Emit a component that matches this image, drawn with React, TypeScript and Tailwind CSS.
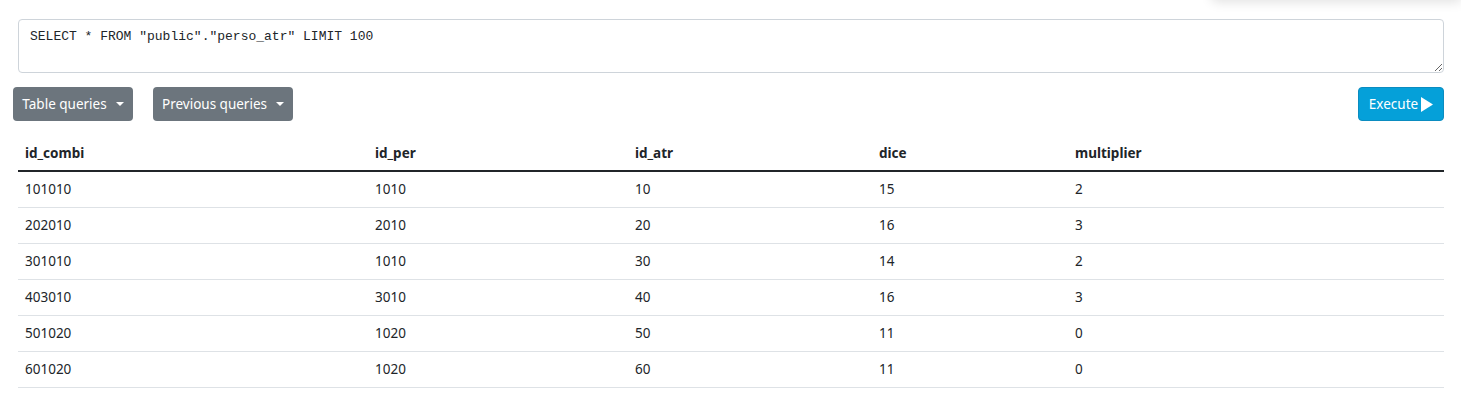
import React from "react";

const rows = [
  ["101010", "1010", "10", "15", "2"],
  ["202010", "2010", "20", "16", "3"],
  ["301010", "1010", "30", "14", "2"],
  ["403010", "3010", "40", "16", "3"],
  ["501020", "1020", "50", "11", "0"],
  ["601020", "1020", "60", "11", "0"],
];

const headers = ["id_combi", "id_per", "id_atr", "dice", "multiplier"];
const widths = ["w-[350px]", "w-[260px]", "w-[244px]", "w-[196px]", ""];

const Caret: React.FC = () => (
  <span className="ml-[9px] inline-block w-0 h-0 border-l-[4px] border-r-[4px] border-t-[4px] border-l-transparent border-r-transparent border-t-white align-middle" />
);

const App: React.FC = () => {
  return (
    <div className="relative w-[1461px] h-[418px] bg-white overflow-hidden font-['Segoe_UI','Noto_Sans',sans-serif] text-[#212529]">
      <div className="absolute right-0 top-[-40px] w-[250px] h-[40px] bg-white shadow-[0_2px_12px_rgba(0,0,0,0.12)] rounded-bl-[6px]" />
      <div className="pt-[19px] pl-[18px] pr-[17px]">
        <textarea
          defaultValue={'SELECT * FROM "public"."perso_atr" LIMIT 100'}
          className="block w-full h-[54px] border border-[#ced4da] rounded-[4px] px-[11px] py-[8px] font-['Liberation_Mono',monospace] text-[13px] leading-[18px] text-[#212529] outline-none resize-y"
        />
      </div>
      <div className="flex items-center mt-[14px] pl-[13px] pr-[17px]">
        <button className="h-[34px] w-[120px] flex items-center justify-center bg-[#6c757d] text-white text-[13.5px] rounded-[4px]">
          Table queries
          <Caret />
        </button>
        <button className="ml-[20px] h-[34px] w-[140px] flex items-center justify-center bg-[#6c757d] text-white text-[13.5px] rounded-[4px]">
          Previous queries
          <Caret />
        </button>
        <button className="ml-auto h-[34px] w-[86px] flex items-center justify-center bg-[#05a0d9] border border-[#0b8cc0] text-white text-[13.5px] rounded-[4px]">
          Execute
          <svg width="12" height="15" viewBox="0 0 12 15" className="ml-[3px]">
            <path d="M0 0 L12 7.5 L0 15 Z" fill="white" />
          </svg>
        </button>
      </div>
      <div className="pl-[18px] pr-[17px] mt-[16px]">
        <table className="w-full border-collapse text-[13.5px]">
          <thead>
            <tr className="border-b-2 border-[#212529]">
              {headers.map((h, i) => (
                <th key={h} className={`${widths[i]} text-left font-bold px-[7px] pt-[7px] pb-[7px] leading-[19px]`}>
                  {h}
                </th>
              ))}
            </tr>
          </thead>
          <tbody>
            {rows.map((r, ri) => (
              <tr key={ri} className="border-b border-[#dee2e6]">
                {r.map((c, ci) => (
                  <td key={ci} className="px-[7px] h-[36px] leading-[19px] align-middle">
                    {c}
                  </td>
                ))}
              </tr>
            ))}
          </tbody>
        </table>
      </div>
    </div>
  );
};

export default App;
